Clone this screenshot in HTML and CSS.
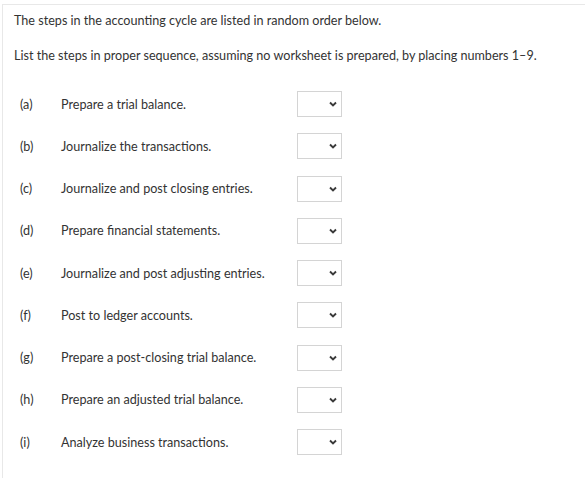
FILE: index.html
```html
<!DOCTYPE html>
<html>
<head>
<meta charset="utf-8">
<link rel="stylesheet" href="styles.css">
</head>
<body>
<div class="panel">
  <p class="intro">The steps in the accounting cycle are listed in random order below.</p>
  <p class="intro second">List the steps in proper sequence, assuming no worksheet is prepared, by placing numbers 1–9.</p>
  <div class="steps">
    <div class="row"><span class="lbl">(a)</span><span class="txt">Prepare a trial balance.</span><span class="sel"><svg viewBox="0 0 10 10" width="10" height="10"><path d="M2 3.5 L5 6.5 L8 3.5" fill="none" stroke="#3a3a3a" stroke-width="1.9"/></svg></span></div>
    <div class="row"><span class="lbl">(b)</span><span class="txt">Journalize the transactions.</span><span class="sel"><svg viewBox="0 0 10 10" width="10" height="10"><path d="M2 3.5 L5 6.5 L8 3.5" fill="none" stroke="#3a3a3a" stroke-width="1.9"/></svg></span></div>
    <div class="row"><span class="lbl">(c)</span><span class="txt">Journalize and post closing entries.</span><span class="sel"><svg viewBox="0 0 10 10" width="10" height="10"><path d="M2 3.5 L5 6.5 L8 3.5" fill="none" stroke="#3a3a3a" stroke-width="1.9"/></svg></span></div>
    <div class="row"><span class="lbl">(d)</span><span class="txt">Prepare financial statements.</span><span class="sel"><svg viewBox="0 0 10 10" width="10" height="10"><path d="M2 3.5 L5 6.5 L8 3.5" fill="none" stroke="#3a3a3a" stroke-width="1.9"/></svg></span></div>
    <div class="row"><span class="lbl">(e)</span><span class="txt">Journalize and post adjusting entries.</span><span class="sel"><svg viewBox="0 0 10 10" width="10" height="10"><path d="M2 3.5 L5 6.5 L8 3.5" fill="none" stroke="#3a3a3a" stroke-width="1.9"/></svg></span></div>
    <div class="row"><span class="lbl">(f)</span><span class="txt">Post to ledger accounts.</span><span class="sel"><svg viewBox="0 0 10 10" width="10" height="10"><path d="M2 3.5 L5 6.5 L8 3.5" fill="none" stroke="#3a3a3a" stroke-width="1.9"/></svg></span></div>
    <div class="row"><span class="lbl">(g)</span><span class="txt">Prepare a post-closing trial balance.</span><span class="sel"><svg viewBox="0 0 10 10" width="10" height="10"><path d="M2 3.5 L5 6.5 L8 3.5" fill="none" stroke="#3a3a3a" stroke-width="1.9"/></svg></span></div>
    <div class="row"><span class="lbl">(h)</span><span class="txt">Prepare an adjusted trial balance.</span><span class="sel"><svg viewBox="0 0 10 10" width="10" height="10"><path d="M2 3.5 L5 6.5 L8 3.5" fill="none" stroke="#3a3a3a" stroke-width="1.9"/></svg></span></div>
    <div class="row"><span class="lbl">(i)</span><span class="txt">Analyze business transactions.</span><span class="sel"><svg viewBox="0 0 10 10" width="10" height="10"><path d="M2 3.5 L5 6.5 L8 3.5" fill="none" stroke="#3a3a3a" stroke-width="1.9"/></svg></span></div>
  </div>
</div>
</body>
</html>
```
FILE: styles.css
```css
html, body { margin: 0; padding: 0; background: #fff; }
body {
  font-family: Lato, "Open Sans", "Liberation Sans", sans-serif;
  font-size: 12.6px;
  color: #333;
}
.panel {
  margin: 4px 0 0 2px;
  border-top: 1px solid #e8e8e8;
  border-left: 1px solid #e8e8e8;
  height: 474px;
  box-sizing: border-box;
  padding: 7px 0 0 11px;
}
.intro { margin: 0; line-height: 17px; }
.second { margin-top: 18px; }
.steps {
  display: flex;
  flex-direction: column;
  margin-top: 19px;
  padding-left: 6px;
}
.row {
  display: flex;
  align-items: center;
  height: 42.25px;
}
.lbl { width: 41px; }
.txt { width: 236px; }
.sel {
  width: 45px;
  height: 26px;
  box-sizing: border-box;
  border: 1px solid #d4d4d4;
  display: flex;
  align-items: center;
  justify-content: flex-end;
  padding-right: 3px;
}
.sel svg { display: block; }
```
